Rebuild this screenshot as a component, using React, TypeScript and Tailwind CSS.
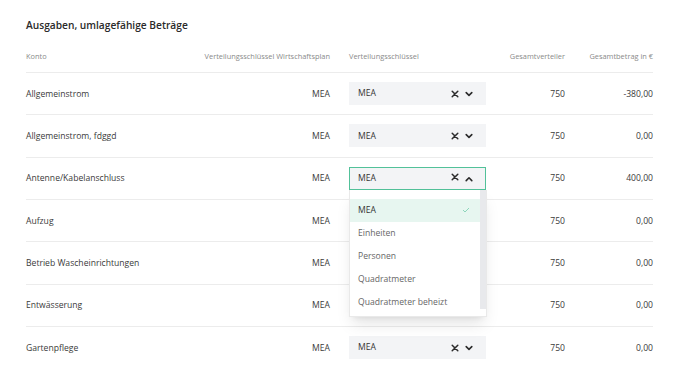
import React from "react";

const rows = [
  { name: "Allgemeinstrom", amount: "-380,00", select: true },
  { name: "Allgemeinstrom, fdggd", amount: "0,00", select: true },
  { name: "Antenne/Kabelanschluss", amount: "400,00", select: true, open: true },
  { name: "Aufzug", amount: "0,00", select: false },
  { name: "Betrieb Wascheinrichtungen", amount: "0,00", select: false },
  { name: "Entwässerung", amount: "0,00", select: false },
  { name: "Gartenpflege", amount: "0,00", select: true },
];

const options = ["MEA", "Einheiten", "Personen", "Quadratmeter", "Quadratmeter beheizt"];

function XIcon() {
  return (
    <svg width="8" height="8" viewBox="0 0 8 8" className="block">
      <path d="M1.2 1.2L6.8 6.8M6.8 1.2L1.2 6.8" stroke="#2b2b2b" strokeWidth="1.5" strokeLinecap="round" />
    </svg>
  );
}

function Chevron({ up }: { up?: boolean }) {
  return (
    <svg width="8" height="6" viewBox="0 0 8 6" className="block">
      <path
        d={up ? "M1.2 4.6L4 1.8L6.8 4.6" : "M1.2 1.6L4 4.4L6.8 1.6"}
        stroke="#2b2b2b"
        strokeWidth="1.6"
        fill="none"
        strokeLinecap="round"
        strokeLinejoin="round"
      />
    </svg>
  );
}

function ClosedSelect() {
  return (
    <div className="w-[137px] h-[23px] flex items-center pl-[9px] pr-[13px] bg-[#f3f4f6]">
      <span className="flex-1 text-[8.6px] text-[#333]">MEA</span>
      <div className="flex items-center gap-[6px]">
        <XIcon />
        <Chevron />
      </div>
    </div>
  );
}

function OpenSelect() {
  return (
    <div className="relative w-[137px]">
      <div className="h-[23px] p-[1px] bg-[#52c199]">
        <div className="h-full flex items-center pl-[8px] pr-[12px] bg-[#f3f4f6]">
          <span className="flex-1 text-[8.6px] text-[#333]">MEA</span>
          <div className="flex items-center gap-[6px] -mt-[3px]">
            <XIcon />
            <div className="mt-[4px]">
              <Chevron up />
            </div>
          </div>
        </div>
      </div>
      <div className="absolute left-0 top-full z-10 w-[138px] p-[1px] pt-0 bg-[#e9e9e9] shadow-lg">
        <div className="relative bg-white pt-[9px] pb-[2px]">
          <div className="absolute right-0 top-0 w-[6px] h-[119px] bg-[#e8e9ec]" />
          {options.map((o, i) =>
            i === 0 ? (
              <div key={o} className="relative h-[23px] mr-[6px] flex items-center pl-[8px] pr-[10px] bg-[#e7f6f0] text-[8.6px] text-[#333]">
                <span className="flex-1">{o}</span>
                <svg width="8" height="6" viewBox="0 0 8 6">
                  <path d="M1 3L3 5L7 1" stroke="#8dd6bb" strokeWidth="1" fill="none" />
                </svg>
              </div>
            ) : (
              <div key={o} className="relative h-[23px] mr-[6px] flex items-center pl-[8px] pr-[10px] text-[8.6px] text-[#666]">
                <span className="flex-1">{o}</span>
              </div>
            )
          )}
        </div>
      </div>
    </div>
  );
}

export default function App() {
  return (
    <div
      className="w-[688px] h-[367px] overflow-hidden bg-white pt-[17px] pl-[26px] pr-[35px]"
      style={{ fontFamily: '"Open Sans", "Liberation Sans", sans-serif' }}
    >
      <div className="h-[16px] leading-[16px] text-[10.2px] font-semibold text-[#2a2a2a]">
        Ausgaben, umlagefähige Beträge
      </div>
      <div className="grid grid-cols-[164px_140px_156px_79px_88px] h-[40px] items-end pb-[10px] border-b border-[#ececec] text-[7.4px] text-[#8a8a8a] leading-[12px]">
        <div>Konto</div>
        <div className="text-right">Verteilungsschlüssel Wirtschaftsplan</div>
        <div className="pl-[19px]">Verteilungsschlüssel</div>
        <div className="text-right">Gesamtverteiler</div>
        <div className="text-right">Gesamtbetrag in €</div>
      </div>
      {rows.map((r) => (
        <div
          key={r.name}
          className="grid grid-cols-[164px_140px_156px_79px_88px] h-[42.33px] items-center border-b border-[#ececec] text-[8.6px] text-[#3a3a3a]"
        >
          <div className="pt-[1px]">{r.name}</div>
          <div className="text-right pt-[1px]">MEA</div>
          <div className="pl-[19px]">{r.open ? <OpenSelect /> : r.select ? <ClosedSelect /> : null}</div>
          <div className="text-right pt-[1px]">750</div>
          <div className="text-right pt-[1px]">{r.amount}</div>
        </div>
      ))}
    </div>
  );
}
